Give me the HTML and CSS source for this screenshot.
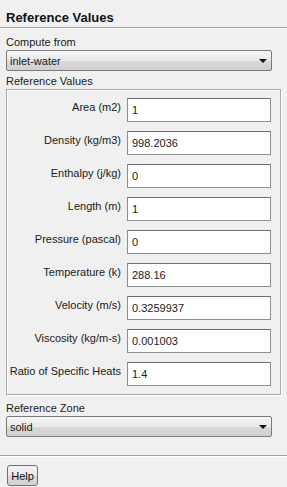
FILE: index.html
```html
<!DOCTYPE html>
<html lang="en">
<head>
  <meta charset="UTF-8" />
  <title>Reference Values</title>
  <link rel="stylesheet" href="styles.css">
</head>
<body>

<div class="panel">
  <!-- Title -->
  <h1 class="title">Reference Values</h1>
  <div class="rule"></div>

  <!-- Compute from -->
  <div class="block">
    <div class="caption">Compute from</div>
    <div class="combo">
      <span>inlet-water</span>
      <span class="arrow"></span>
    </div>

    <div class="caption tight">Reference Values</div>
    <div class="group">
      <div class="row"><label>Area (m2)</label><div class="field">1</div></div>
      <div class="row"><label>Density (kg/m3)</label><div class="field">998.2036</div></div>
      <div class="row"><label>Enthalpy (j/kg)</label><div class="field">0</div></div>
      <div class="row"><label>Length (m)</label><div class="field">1</div></div>
      <div class="row"><label>Pressure (pascal)</label><div class="field">0</div></div>
      <div class="row"><label>Temperature (k)</label><div class="field">288.16</div></div>
      <div class="row"><label>Velocity (m/s)</label><div class="field">0.3259937</div></div>
      <div class="row"><label>Viscosity (kg/m-s)</label><div class="field">0.001003</div></div>
      <div class="row"><label>Ratio of Specific Heats</label><div class="field">1.4</div></div>
    </div>

    <div class="caption">Reference Zone</div>
    <div class="combo">
      <span>solid</span>
      <span class="arrow"></span>
    </div>
  </div>

  <div class="rule bottom"></div>

  <!-- Footer -->
  <div class="footer">
    <button class="btn">Help</button>
  </div>
</div>

</body>
</html>
```

FILE: styles.css
```css
body {
  margin: 0;
  background-color: #f0f0f0;
  font-family: "Liberation Sans", Arial, sans-serif;
  font-size: 11px;
  color: #1a1a1a;
}
.panel {
  width: 287px;
  height: 487px;
  overflow: hidden;
}
.title {
  margin: 0;
  padding: 10px 0 0 6px;
  height: 16px;
  font-size: 13px;
  line-height: 16px;
  font-weight: bold;
  color: #111;
}
.rule {
  margin-top: 1px;
  height: 1px;
  background-color: #a0a0a0;
  border-bottom: 1px solid #fff;
}
.block {
  padding: 0 6px;
}
.caption {
  height: 14px;
  line-height: 14px;
  padding-top: 6px;
  padding-bottom: 1px;
}
.caption.tight {
  padding-top: 3px;
}
.combo {
  display: flex;
  align-items: center;
  justify-content: space-between;
  width: 266px;
  height: 21px;
  box-sizing: border-box;
  padding: 0 0 0 3px;
  border: 1px solid #7a7a7a;
  border-radius: 2px;
  background: linear-gradient(#f6f6f6, #e9e9e9 50%, #d9d9d9 51%, #d0d0d0);
}
.combo .arrow {
  width: 0;
  height: 0;
  margin-right: 4px;
  border-left: 4px solid transparent;
  border-right: 4px solid transparent;
  border-top: 4px solid #111;
}
.group {
  display: flex;
  flex-direction: column;
  gap: 9px;
  width: 275px;
  box-sizing: border-box;
  padding: 8px 0 8px 1px;
  border: 1px solid #a9a9a9;
  box-shadow: inset 1px 1px 0 #fff, 1px 1px 0 #fff;
}
.row {
  display: flex;
  gap: 6px;
}
.row label {
  width: 113px;
  text-align: right;
  line-height: 14px;
  padding-top: 2px;
}
.field {
  width: 144px;
  height: 24px;
  box-sizing: border-box;
  padding: 4px 0 0 4px;
  background-color: #fff;
  border: 1px solid #8e8f8f;
  border-top-color: #6e6e6e;
  line-height: 14px;
}
.rule.bottom {
  margin-top: 18px;
}
.footer {
  padding: 8px 0 0 7px;
}
.btn {
  width: 31px;
  height: 21px;
  padding: 0;
  font-family: "Liberation Sans", Arial, sans-serif;
  font-size: 11px;
  color: #111;
  border: 1px solid #707070;
  border-radius: 3px;
  background: linear-gradient(#f4f4f4, #e8e8e8 50%, #dadada 51%, #d2d2d2);
}
```
